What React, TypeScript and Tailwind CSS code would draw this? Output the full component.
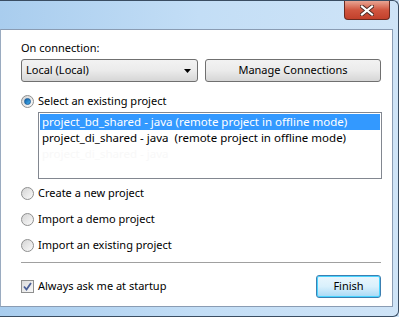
import * as React from 'react';

function Radio({ checked }: { checked?: boolean }) {
  return (
    <span className="w-[13px] h-[13px] rounded-full border border-[#8e8f8f] bg-gradient-to-br from-[#d4d4d4] to-[#fbfbfb] flex items-center justify-center shrink-0">
      {checked && <span className="w-[7px] h-[7px] rounded-full bg-gradient-to-br from-[#0e5ea6] to-[#45b2ef] border border-[#1d5f9b]" />}
    </span>
  );
}

function RadioRow({ label, checked }: { label: string; checked?: boolean }) {
  return (
    <div className="flex items-center gap-[4px] h-[16px]">
      <Radio checked={checked} />
      <span>{label}</span>
    </div>
  );
}

export default function App() {
  return (
    <div
      className="w-[399px] h-[317px] overflow-hidden bg-gradient-to-r from-[#a9cdee] via-[#c3def6] to-[#cfe4f7] flex flex-col text-[11px] text-black"
      style={{ fontFamily: '"Segoe UI", "Noto Sans", "Open Sans", sans-serif' }}
    >
      {/* title bar */}
      <div className="h-[29px] flex justify-end pr-[8px] shrink-0 border-t border-r border-[#3a4d62] rounded-tr-[6px]">
        <button className="w-[46px] h-[19px] rounded-b-[4px] border border-t-0 border-[#6b2a20] bg-gradient-to-b from-[#e8a493] via-[#d0553f] to-[#c2402b] flex items-center justify-center">
          <svg width="14" height="11" viewBox="0 0 14 11">
            <path d="M2 1.5 L12 9.5 M12 1.5 L2 9.5" stroke="#4b2a24" strokeWidth="4" strokeLinecap="square" />
            <path d="M2 1.5 L12 9.5 M12 1.5 L2 9.5" stroke="#ffffff" strokeWidth="2.2" strokeLinecap="square" />
          </svg>
        </button>
      </div>

      <div className="flex flex-1 border-r border-b border-[#3a4d62] rounded-br-[6px]">
        <div className="flex-1 flex flex-col pr-[7px] pb-[9px]">
          {/* content panel */}
          <div className="flex-1 bg-white border border-[#8a9cb3] border-l-[#9aabc0] flex flex-col pl-[20px] pr-[10px] pt-[10px]">
            <div className="leading-[16px]">On connection:</div>
            <div className="flex gap-[7px] mt-[3px]">
              <div className="w-[177px] h-[23px] rounded-[3px] border border-[#707070] bg-gradient-to-b from-[#f2f2f2] via-[#ebebeb] to-[#d6d6d6] flex items-center justify-between pl-[4px] pr-[6px]">
                <span>Local (Local)</span>
                <svg width="7" height="4" viewBox="0 0 7 4"><path d="M0 0 H7 L3.5 4 Z" fill="#000" /></svg>
              </div>
              <button className="w-[176px] h-[23px] rounded-[3px] border border-[#707070] bg-gradient-to-b from-[#f2f2f2] via-[#ebebeb] to-[#d6d6d6] flex items-center justify-center">
                Manage Connections
              </button>
            </div>

            <div className="mt-[11px]">
              <RadioRow label="Select an existing project" checked />
            </div>
            <div className="ml-[17px] mt-[3px] w-[344px] h-[67px] border border-[#828790] flex flex-col p-[1px] text-[11.5px]">
              <div className="h-[16px] bg-[#3399ff] text-white pl-[2px] leading-[16px]">project_bd_shared - java (remote project in offline mode)</div>
              <div className="h-[16px] pl-[2px] leading-[16px]">project_di_shared - java&nbsp;&nbsp;(remote project in offline mode)</div>
              <div className="h-[16px] pl-[2px] leading-[16px] text-[#f8f8f8]">project_di_shared - java</div>
            </div>

            <div className="flex flex-col gap-[10px] mt-[6px]">
              <RadioRow label="Create a new project" />
              <RadioRow label="Import a demo project" />
              <RadioRow label="Import an existing project" />
            </div>

            <div className="h-px bg-[#a0a0a0] mt-[9px] w-[360px]" />

            <div className="flex items-center justify-between mt-[12px] w-[360px]">
              <div className="flex items-center gap-[4px]">
                <span className="w-[13px] h-[13px] border border-[#8e8f8f] bg-gradient-to-br from-[#dcdcdc] to-[#f8f8f8] flex items-center justify-center">
                  <svg width="9" height="9" viewBox="0 0 9 9"><path d="M1 4.5 L3.5 7.5 L8 1" stroke="#4a5f97" strokeWidth="1.8" fill="none" /></svg>
                </span>
                <span>Always ask me at startup</span>
              </div>
              <button className="w-[65px] h-[23px] rounded-[3px] border border-[#3c7fb1] bg-gradient-to-b from-[#eaf6fd] via-[#d9f0fc] to-[#a7d9f5] shadow-[inset_0_0_0_1px_#48d4ff] flex items-center justify-center">
                Finish
              </button>
            </div>
          </div>
        </div>
      </div>
    </div>
  );
}
